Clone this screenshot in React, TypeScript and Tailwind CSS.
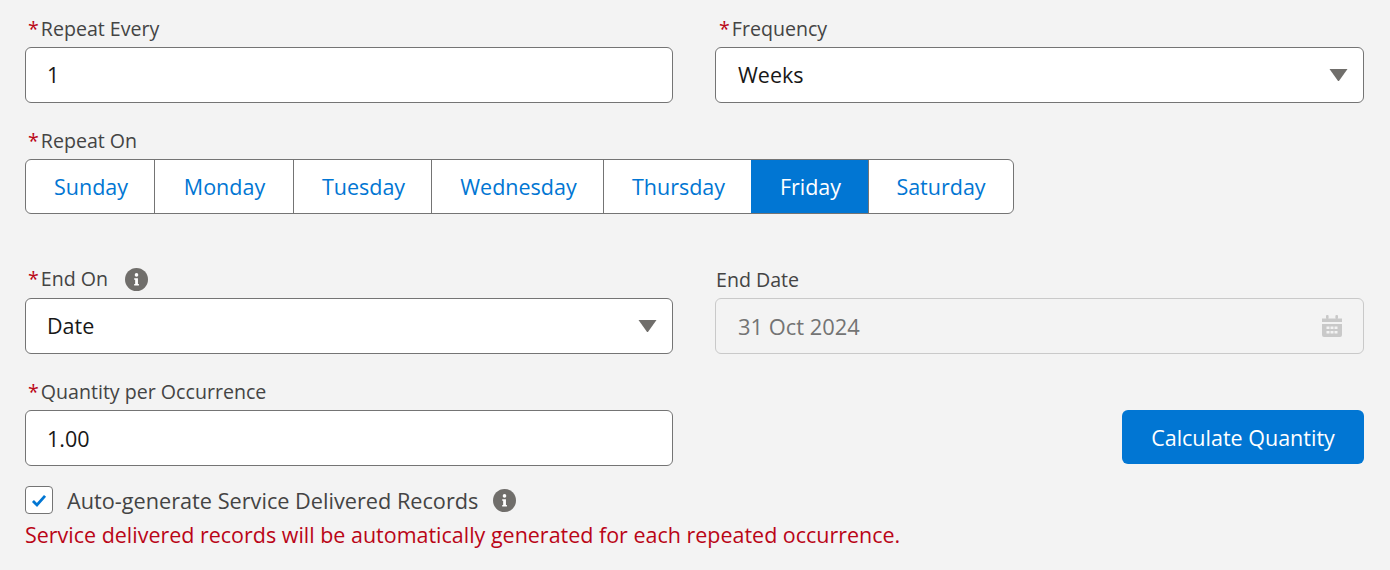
function Required() {
  return <span className="mr-[2px] text-[#ba0517]">*</span>;
}

function InfoIcon() {
  return (
    <svg viewBox="0 0 24 24" className="h-[23px] w-[23px] shrink-0">
      <circle cx="12" cy="12" r="12" fill="#706e6b" />
      <circle cx="12" cy="7.2" r="1.9" fill="#fff" />
      <path d="M9.6 10.6h3.9v6h1v1.6H9.6v-1.6h1v-4.4h-1z" fill="#fff" />
    </svg>
  );
}

function Caret() {
  return (
    <svg viewBox="0 0 18 12" className="h-[12px] w-[19px] shrink-0">
      <path d="M0 0h18L9.8 11.4a1 1 0 0 1-1.6 0z" fill="#706e6b" />
    </svg>
  );
}

function CalendarIcon() {
  return (
    <svg viewBox="0 0 22 24" className="h-[24px] w-[22px] shrink-0" fill="#c9c9c9">
      <rect x="5" y="1" width="2.6" height="4" rx="1" />
      <rect x="14.4" y="1" width="2.6" height="4" rx="1" />
      <path d="M1 4.5h20v3.5H1z" />
      <path
        fillRule="evenodd"
        d="M1 10h20v11a2 2 0 0 1-2 2H3a2 2 0 0 1-2-2zM5.5 12.5v2.6h3v-2.6zm4 0v2.6h3v-2.6zm4 0v2.6h3v-2.6zM5.5 17v2.6h3V17zm4 0v2.6h3V17zm4 0v2.6h3V17z"
      />
    </svg>
  );
}

function Field({ value, caret, textClass = "", indent = "pl-[21px]" }: { value: string; caret?: boolean; textClass?: string; indent?: string }) {
  return (
    <div className={`flex h-[56px] items-center justify-between rounded-[6px] border border-[#747474] bg-white pr-[15px] text-[#181818] ${indent}`}>
      <span className={textClass}>{value}</span>
      {caret && <Caret />}
    </div>
  );
}

const days = [
  { name: "Sunday", width: "w-[128px] pl-[2px]" },
  { name: "Monday", width: "w-[139px] pl-px" },
  { name: "Tuesday", width: "w-[138px] pl-[2px]" },
  { name: "Wednesday", width: "w-[172px] pl-[2px]" },
  { name: "Thursday", width: "w-[148px] pl-[2px]" },
  { name: "Friday", width: "w-[117px] pl-px" },
  { name: "Saturday", width: "w-[145px]" },
];

export default function App() {
  return (
    <div className="h-[570px] w-[1390px] overflow-hidden bg-[#f3f3f3] pl-[25px] pr-[26px] pt-[15px] font-['Open_Sans',sans-serif] text-[21.5px] leading-[28px] text-[#444444]">
      <div className="grid grid-cols-[648px_1fr] gap-x-[42px]">
        <div>
          <div className="mb-[4px] pl-[3px] text-[19.6px]">
            <Required />
            Repeat Every
          </div>
          <Field value="1" />
        </div>
        <div>
          <div className="mb-[4px] pl-[4px] text-[19.6px]">
            <Required />
            Frequency
          </div>
          <Field value="Weeks" caret indent="pl-[22px]" />
        </div>
      </div>

      <div className="mt-[24px]">
        <div className="mb-[4px] pl-[3px] text-[19.6px]">
          <Required />
          Repeat On
        </div>
        <div className="flex h-[55px] w-fit overflow-hidden rounded-[6px] border border-[#747474] bg-white">
          {days.map((day, i) => (
            <div
              key={day.name}
              className={`flex items-center justify-center ${day.width} ${i > 0 ? "border-l border-[#747474]" : ""} ${
                day.name === "Friday" ? "border-l-[#0176d3] bg-[#0176d3] text-white" : "text-[#0176d3]"
              }`}
            >
              {day.name}
            </div>
          ))}
        </div>
      </div>

      <div className="mt-[51px] grid grid-cols-[648px_1fr] gap-x-[42px]">
        <div>
          <div className="mb-[5px] flex items-center pl-[3px] text-[19.6px]">
            <Required />
            <span>End On</span>
            <span className="ml-[17px]">
              <InfoIcon />
            </span>
          </div>
          <Field value="Date" caret />
        </div>
        <div>
          <div className="mb-[5px] pl-px pt-px text-[19.6px] leading-[27px]">End Date</div>
          <div className="flex h-[56px] items-center justify-between rounded-[6px] border border-[#c9c9c9] bg-[#f3f3f3] pl-[22px] pr-[20px] text-[#747474]">
            <span className="pt-[2px] text-[21.9px]">31 Oct 2024</span>
            <CalendarIcon />
          </div>
        </div>
      </div>

      <div className="mt-[24px] grid grid-cols-[648px_1fr] gap-x-[42px]">
        <div>
          <div className="mb-[4px] pl-[3px] text-[19.6px]">
            <Required />
            Quantity per Occurrence
          </div>
          <Field value="1.00" textClass="pt-[2px]" />
        </div>
        <div className="flex items-end justify-end">
          <button className="mb-[2px] h-[54px] w-[242px] rounded-[6px] bg-[#0176d3] pt-[2px] text-white">Calculate Quantity</button>
        </div>
      </div>

      <div className="mt-[20px] flex h-[28px] items-center">
        <span className="flex h-[28px] w-[28px] items-center justify-center rounded-[4px] border border-[#747474] bg-white">
          <svg viewBox="0 0 16 14" className="h-[13px] w-[16px]">
            <path d="M1.5 7.5l4.3 4.3L14.5 2" fill="none" stroke="#0176d3" strokeWidth="3" />
          </svg>
        </span>
        <span className="ml-[14px] pt-[2px] text-[21.7px]">Auto-generate Service Delivered Records</span>
        <span className="ml-[15px]">
          <InfoIcon />
        </span>
      </div>
      <div className="mt-[7px] text-[21.47px] text-[#ba0517]">
        Service delivered records will be automatically generated for each repeated occurrence.
      </div>
    </div>
  );
}
